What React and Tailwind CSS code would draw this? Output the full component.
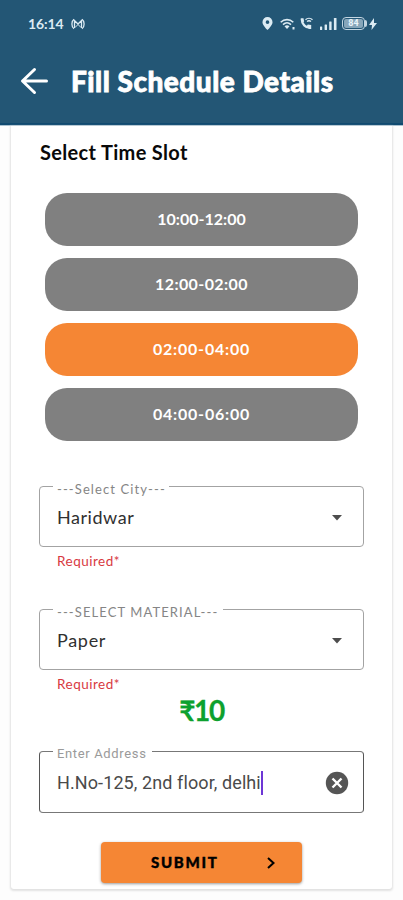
import React from 'react';

const slots = [
  { label: '10:00-12:00', active: false, spacing: 'tracking-[0px]' },
  { label: '12:00-02:00', active: false, spacing: 'tracking-[0.4px]' },
  { label: '02:00-04:00', active: true, spacing: 'tracking-[0.8px]' },
  { label: '04:00-06:00', active: false, spacing: 'tracking-[0.8px]' },
];

function StatusBar() {
  return (
    <div className="flex h-[47px] items-center pl-7 pr-[26px] text-[#dcebf3]">
      <span className="w-[36px] whitespace-nowrap font-['Lato',sans-serif] text-[14px] font-bold leading-4 tracking-[-0.1px]">16:14</span>
      <svg className="ml-[7px] h-3 w-[14px]" viewBox="0 0 14 12" fill="none" stroke="currentColor" strokeWidth="1.3">
        <path d="M3 1.200C.2 3 .2 9 3 10.800M11 1.200c2.800 1.800 2.800 7.800 0 9.600M3.500 10V2.500L7 6l3.500-3.500V10" />
        <path d="M4 9.500 7 6.500l3 3" strokeWidth="1" />
      </svg>
      <div className="ml-auto flex items-center">
        <svg className="h-[13px] w-[11px]" viewBox="0 0 12 14" fill="currentColor">
          <path fillRule="evenodd" d="M6 0a5.500 5.500 0 0 0-5.500 5.500C.5 9 6 14 6 14s5.500-5 5.500-8.500A5.500 5.500 0 0 0 6 0Zm0 3.500a2 2 0 1 1 0 4 2 2 0 0 1 0-4Z" />
        </svg>
        <svg className="ml-[7px] h-3 w-4" viewBox="0 0 16 12" fill="none" stroke="currentColor">
          <path d="M.7 4.300c3.700-3.600 8.900-3.600 12.600 0M3 6.600c2.500-2.300 5.500-2.300 8 0" strokeWidth="1.600" />
          <path d="M4.500 8.300c1.700-1.300 3.300-1.300 5 0L7 11Z" fill="currentColor" stroke="none" />
          <path d="M13.500 9v2.500" strokeWidth="2" />
        </svg>
        <svg className="ml-[4px] h-[13px] w-[13px]" viewBox="0 0 13 13" fill="none" stroke="currentColor">
          <path d="M1.700 2C1.700 7 5.500 11 10.500 11" strokeWidth="2.200" />
          <path d="M.6 1.200h2.900l.6 3.300-1.500 1.300M6.500 9.200l1.300-1.700 3.400.6v4H9" fill="currentColor" stroke="none" />
          <path d="M5.500 2.800c2-1.900 5-1.900 7 0M7 4.600c1.200-1 2.800-1 4 0" strokeWidth="1.300" />
        </svg>
        <svg className="ml-[7px] h-3 w-[17px]" viewBox="0 0 17 12" fill="currentColor">
          <rect x="0" y="8.500" width="2.200" height="3.500" rx=".5" />
          <rect x="4.600" y="6.500" width="2.400" height="5.500" rx=".5" />
          <rect x="9.200" y="3.500" width="2.400" height="8.500" rx=".5" />
          <rect x="13.900" y="0" width="2.600" height="12" rx=".5" />
        </svg>
        <div className="ml-[5px] flex h-[13px] w-[23px] items-center justify-center rounded-[4px] border border-[#c3d5e1] p-[1px]">
          <span className="flex h-[9px] w-full items-center justify-center rounded-[2px] bg-[#87a6ba] font-['Roboto',sans-serif] text-[9px] font-bold leading-none text-[#e9f4fa]">84</span>
        </div>
        <span className="h-[7px] w-[2px] rounded-r bg-[#c3d5e1]" />
        <svg className="ml-[2px] h-3 w-2" viewBox="0 0 8 12" fill="currentColor">
          <path d="M5 0 0 7h3L2.500 12 8 5H5Z" />
        </svg>
      </div>
    </div>
  );
}

function Field({ label, labelClass, children, dark }) {
  return (
    <fieldset className={`w-[325px] rounded-[4px] border pl-[13px] ${dark ? 'h-[66px] border-[#777777] border-x-[#555555]' : 'h-[65px] border-[#a3a3a3]'}`}>
      <legend className="h-2 whitespace-nowrap pl-[4px]">
        <span className={`block translate-y-[-1px] leading-4 ${labelClass}`}>{label}</span>
      </legend>
      <div className="flex h-[55px] items-center justify-between pl-1">{children}</div>
    </fieldset>
  );
}

function Dropdown({ value, valueClass }) {
  return (
    <>
      <span className={`font-['Lato',sans-serif] text-[18px] text-[#303030] ${valueClass}`}>{value}</span>
      <svg className="mr-[21px] h-[6px] w-[10px]" viewBox="0 0 10 6" fill="#4d4d4d"><path d="M0 0h10L5 5.500Z" /></svg>
    </>
  );
}

function Required() {
  return <p className="ml-[18px] mt-[4px] h-5 font-['Lato',sans-serif] text-[13.500px] leading-5 tracking-[0.5px] text-[#d8393f]">Required*</p>;
}

export default function App() {
  return (
    <main className="h-[900px] w-[403px] overflow-hidden bg-[#fdfdfd] font-['Lato',sans-serif]">
      <header className="h-[126px] border-b border-[#a9c1d0] bg-[#235675] shadow-[inset_0_-2px_0_#104a70]">
        <StatusBar />
        <div className="flex h-[68px] items-center pl-5 text-white">
          <svg className="h-7 w-7" viewBox="0 0 28 28" fill="none" stroke="currentColor" strokeWidth="3" strokeLinecap="round" strokeLinejoin="round">
            <path d="M14.500 2.500 2.500 14l12 11.500M3 14h23.500" />
          </svg>
          <h1 className="ml-[23px] whitespace-nowrap text-[28px] font-black leading-8 tracking-[0.5px] [-webkit-text-stroke:0.8px_white]">Fill Schedule Details</h1>
        </div>
      </header>
      <section className="ml-[11px] flex h-[763px] w-[381px] flex-col rounded-b-[3px] bg-white pl-7 shadow-[0_1px_2px_1px_#e2e2e2]">
        <h2 className="ml-px mt-[13px] h-[26px] whitespace-nowrap text-[20px] font-bold leading-[26px] tracking-[0.33px] text-[#090909]">Select Time Slot</h2>
        <div className="ml-[6px] mt-[28px] flex flex-col gap-[12px]">
          {slots.map((s) => (
            <button key={s.label} className={`flex h-[53px] w-[313px] items-center justify-center rounded-[22px] pb-px text-[16px] font-bold text-white ${s.spacing} ${s.active ? 'bg-[#f58634]' : 'bg-[#808080]'}`}>
              {s.label}
            </button>
          ))}
        </div>
        <div className="mt-[41px]">
          <Field label="---Select City---" labelClass="text-[13px] w-[112px] tracking-[1.1px] text-[#858585]">
            <Dropdown value="Haridwar" valueClass="tracking-[0.55px]" />
          </Field>
          <Required />
        </div>
        <div className="mt-[34px]">
          <Field label="---SELECT MATERIAL---" labelClass="text-[13px] w-[166px] tracking-[1.1px] text-[#858585]">
            <Dropdown value="Paper" valueClass="tracking-[0.7px]" />
          </Field>
          <Required />
        </div>
        <p className="-ml-7 h-8 text-center font-['Lato','Noto_Sans',sans-serif] text-[28px] font-bold leading-8 tracking-[-1.400px] text-[#0da12e] [-webkit-text-stroke:0.3px_#0da12e]">₹10</p>
        <div className="mt-[21px]">
          <Field dark label="Enter Address" labelClass="font-['Roboto',sans-serif] text-[13px] w-[95px] tracking-[0.65px] text-[#9a9a9a]">
            <div className="flex items-center">
              <span className="whitespace-nowrap font-['Roboto',sans-serif] text-[18px] tracking-[0.1px] text-[#4a4a4a]">H.No-125, 2nd floor, delhi</span>
              <span className="h-6 w-[2px] bg-[#6d36d5]" />
            </div>
            <svg className="mr-[14px] h-6 w-6" viewBox="0 0 24 24">
              <circle cx="12" cy="12" r="11.200" fill="#555" />
              <path d="m7.500 7.500 9 9m0-9-9 9" stroke="white" strokeWidth="2.400" />
            </svg>
          </Field>
        </div>
        <button className="ml-[62px] mt-[29px] flex h-[41px] w-[201px] shrink-0 items-center rounded-[4px] bg-[#f58634] pl-[50px] text-black shadow-[0_1px_3px_#999]">
          <span className="w-[67px] whitespace-nowrap text-[15px] font-black tracking-[1.700px] [-webkit-text-stroke:0.4px_black]">SUBMIT</span>
          <svg className="ml-[49px] h-3 w-2" viewBox="0 0 8 12" fill="none" stroke="currentColor" strokeWidth="2"><path d="m1 1 5.500 5L1 11" /></svg>
        </button>
      </section>
    </main>
  );
}
